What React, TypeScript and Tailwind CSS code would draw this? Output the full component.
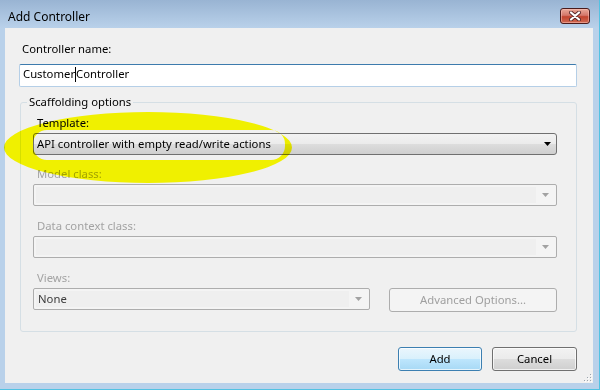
import React from "react";

const FONT = "font-['Segoe_UI','Noto_Sans',sans-serif]";

function Arrow({ color }: { color: string }) {
  return (
    <svg width="7" height="4" viewBox="0 0 7 4">
      <path d="M0 0h7L3.5 4z" fill={color} />
    </svg>
  );
}

function DisabledCombo({ className = "", text = "" }: { className?: string; text?: string }) {
  return (
    <div className={`flex h-[22px] rounded-[2px] border border-[#adadad] bg-[#f4f4f4] p-[2px] ${className}`}>
      <div className="flex flex-1 items-center bg-[#efefef] pl-[2px] leading-[16px] text-[#3c3c3c]">{text}</div>
      <div className="flex w-[18px] items-center justify-center">
        <Arrow color="#a2a2a2" />
      </div>
    </div>
  );
}

function Field({ label, disabled, children, className = "" }: { label: string; disabled?: boolean; children: React.ReactNode; className?: string }) {
  return (
    <div className={className}>
      <div className={`mb-[2px] pl-[4px] leading-[16px] ${disabled ? "text-[#a3a3a3]" : "text-black"}`}>{label}</div>
      {children}
    </div>
  );
}

export default function App() {
  return (
    <div className={`relative h-[390px] w-[600px] overflow-hidden border-r border-b border-[#52c2e2] bg-[#b9d1ea] text-[11.3px] ${FONT}`}>
      {/* title bar */}
      <div className="flex h-[28px] items-start justify-between bg-[linear-gradient(to_bottom,#99b4d3,#b9d1ea)]">
        <div className="pl-[8px] pt-[9px] text-[12px] leading-[16px] text-black">Add Controller</div>
        <button className="mr-[9px] mt-[8px] flex h-[16px] w-[30px] items-center justify-center rounded-[3px] border border-[#4a1c1c] bg-[linear-gradient(to_bottom,#e9a999_0%,#d4776a_45%,#c2442f_55%,#cf6a52_100%)] shadow-[inset_0_0_0_1px_rgba(255,200,190,0.5)]">
          <svg width="12" height="10" viewBox="0 0 12 10">
            <path d="M2 1.5l8 7M10 1.5l-8 7" stroke="#5a2a2a" strokeWidth="4" strokeLinecap="round" />
            <path d="M2 1.5l8 7M10 1.5l-8 7" stroke="#ffffff" strokeWidth="2.2" strokeLinecap="round" />
          </svg>
        </button>
      </div>

      {/* client area */}
      <div className="relative ml-[5px] mr-[6px] h-[355px] bg-[#f0f0f0] pl-[14px] pr-[16px] pt-[13px]">
        <div className="mb-[7px] pl-[3px] leading-[16px] text-black">Controller name:</div>
        <div className="flex h-[23px] items-start rounded-[2px] border border-[#b5cfe7] border-t-[#3d7bad] bg-white pl-[3px] pt-[1px] leading-[16px] text-black">
          <span>Customer</span>
          <span className="mt-[1px] inline-block h-[15px] w-[1px] bg-black" />
          <span>Controller</span>
        </div>

        <fieldset className="ml-[1px] mt-[7px] rounded-[3px] border border-[#d5dfe5] p-0">
          <legend className="ml-[6px] px-[2px] leading-[16px] text-black">Scaffolding options</legend>
          <div className="pb-[19px] pl-[12px] pr-[19px] pt-[5px]">
            <Field label="Template:">
              <div className="flex h-[22px] items-center rounded-[3px] border border-[#707070] bg-[linear-gradient(to_bottom,#f2f2f2_0%,#ebebeb_50%,#dddddd_50%,#cfcfcf_100%)] pl-[3px] pr-[5px] leading-[16px] text-black">
                <span className="flex-1">API controller with empty read/write actions</span>
                <Arrow color="#000000" />
              </div>
            </Field>
            <Field label="Model class:" disabled className="mt-[11px]">
              <DisabledCombo />
            </Field>
            <Field label="Data context class:" disabled className="mt-[12px]">
              <DisabledCombo />
            </Field>
            <Field label="Views:" disabled className="mt-[12px]">
              <div className="flex items-start gap-[19px]">
                <DisabledCombo className="w-[337px]" text="None" />
                <button className="h-[24px] w-[168px] rounded-[3px] border border-[#adadad] bg-[#f4f4f4] leading-[16px] text-[#a0a0a0]">
                  Advanced Options...
                </button>
              </div>
            </Field>
          </div>
        </fieldset>

        <div className="mt-[15px] flex justify-end gap-[10px]">
          <button className="h-[24px] w-[84px] rounded-[3px] border border-[#3c7fb1] bg-[linear-gradient(to_bottom,#eaf6fd_0%,#d9f0fc_50%,#bee6fd_50%,#a7d9f5_100%)] leading-[16px] text-black shadow-[inset_0_0_0_1px_rgba(255,255,255,0.7)]">
            Add
          </button>
          <button className="h-[24px] w-[85px] rounded-[3px] border border-[#707070] bg-[linear-gradient(to_bottom,#f2f2f2_0%,#ebebeb_50%,#dddddd_50%,#cfcfcf_100%)] leading-[16px] text-black shadow-[inset_0_0_0_1px_rgba(255,255,255,0.7)]">
            Cancel
          </button>
        </div>

        {/* size grip */}
        <svg className="absolute bottom-[1px] right-[1px]" width="10" height="10" viewBox="0 0 10 10">
          {[
            [8, 2],
            [5, 5],
            [8, 5],
            [2, 8],
            [5, 8],
            [8, 8],
          ].map(([x, y], i) => (
            <g key={i}>
              <rect x={x} y={y} width="1" height="1" fill="#9aa4ae" />
              <rect x={x + 1} y={y + 1} width="1" height="1" fill="#ffffff" />
            </g>
          ))}
        </svg>
      </div>

      {/* yellow highlighter ring */}
      <svg className="pointer-events-none absolute left-0 top-0 mix-blend-multiply" width="600" height="390" viewBox="0 0 600 390">
        <path
          fillRule="evenodd"
          fill="#ffff00"
          d="M4 147.5a144 35.5 0 1 0 288 0a144 35.5 0 1 0 -288 0z M47 130h224a14 14 0 0 1 14 14v2a14 14 0 0 1 -14 14h-224a14 14 0 0 1 -14 -14v-2a14 14 0 0 1 14 -14z"
        />
      </svg>
    </div>
  );
}
